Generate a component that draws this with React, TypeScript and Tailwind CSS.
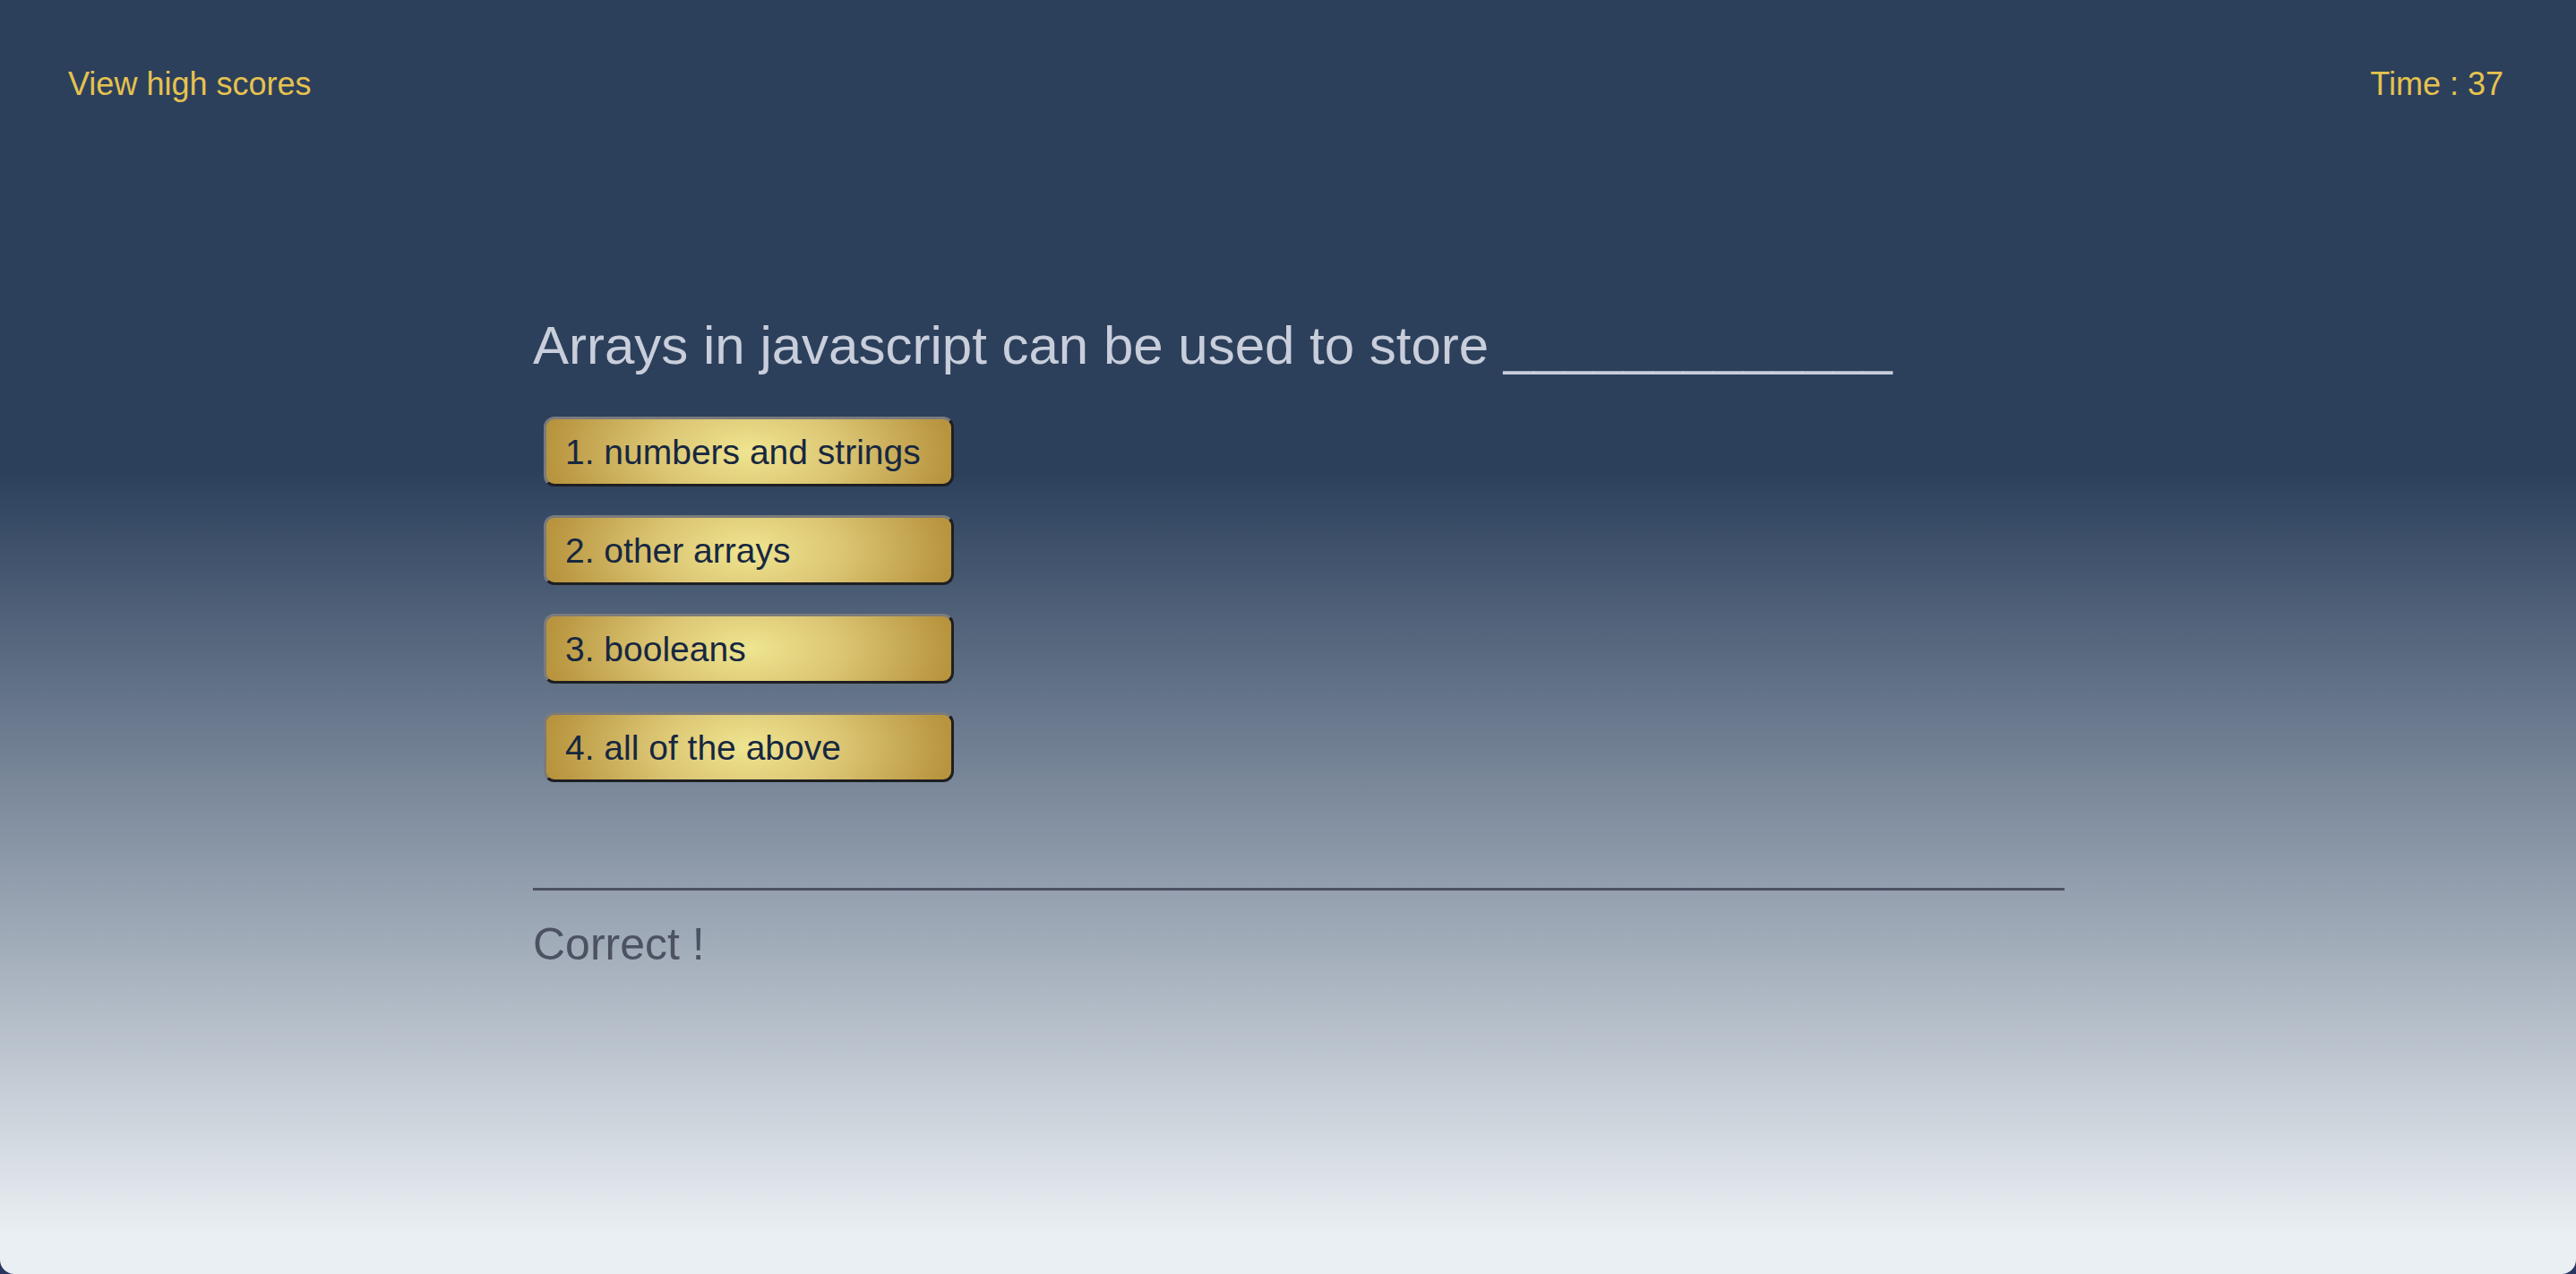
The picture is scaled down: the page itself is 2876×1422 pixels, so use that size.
import React from "react";

const answers = [
  "1. numbers and strings",
  "2. other arrays",
  "3. booleans",
  "4. all of the above",
];

export default function App() {
  return (
    <div className="h-[1422px] w-full bg-[#2b3562]">
      <div
        className="flex h-full w-full flex-col rounded-b-[16px] bg-[linear-gradient(to_bottom,#2c405c_0%,#2c405c_37%,#eaeff3_97%,#eaeff3_100%)]"
        style={{ fontFamily: '"Liberation Sans", Arial, sans-serif' }}
      >
        <header className="flex items-start justify-between pl-[76px] pr-[81px] pt-[76px]">
          <a className="cursor-pointer text-[36px] leading-[36px] text-[#e6c24f]">View high scores</a>
          <div className="text-[36px] leading-[36px] text-[#e6c24f]">Time : 37</div>
        </header>

        <main className="ml-[595px] mt-[243px] flex w-[1710px] flex-col">
          <h1 className="text-[60px] leading-[61px] font-normal text-[#c9cedb]">
            Arrays in javascript can be used to store _____________
          </h1>
          <div className="ml-[12px] mt-[49px] flex flex-col gap-[32px]">
            {answers.map((a) => (
              <button
                key={a}
                className="flex h-[78px] w-[458px] items-center rounded-[12px] border-[3px] border-b-[#1e1f22] border-l-[#7a7b7d] border-r-[#1e1f22] border-t-[#7a7b7d] bg-[radial-gradient(50%_160%_at_50%_50%,#efe590_0%,#dcc674_45%,#b8943e_100%)] pl-[21px] text-left text-[39px] leading-[39px] text-[#172740]"
              >
                {a}
              </button>
            ))}
          </div>
          <div className="mt-[118px] h-[3px] w-full bg-[#4c5263]" />
          <div className="mt-[35px] text-[50px] leading-[50px] text-[#4c5262]">Correct !</div>
        </main>
      </div>
    </div>
  );
}
